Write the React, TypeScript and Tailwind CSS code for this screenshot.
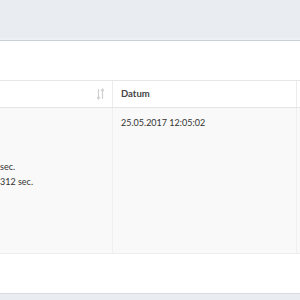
import React from 'react'

const SortIcon = () => (
  <svg width="7" height="12" viewBox="0 0 7 12" className="text-[#d0d0d0]">
    <path d="M1.5 1v10M0 9l1.5 2L3 9" stroke="currentColor" strokeWidth="1.2" fill="none" />
    <path d="M5.5 11V1M4 3l1.5-2L7 3" stroke="currentColor" strokeWidth="1.2" fill="none" />
  </svg>
)

export default function App() {
  return (
    <div className="w-[300px] h-[300px] overflow-hidden bg-white text-[#333] font-['Lato','Liberation_Sans',sans-serif] text-[9px]">
      {/* top bar */}
      <div className="h-[38px] bg-[#e9edf1]" />
      <div className="h-[2px] bg-[#edf1f4]" />
      <div className="h-px bg-[#c9d0d6]" />

      <div className="h-[39px]" />

      {/* table */}
      <div className="border-t border-[#e6e6e6]">
        <div className="flex h-[27px] border-b border-[#e4e4e4]">
          <div className="w-[113px] flex items-center justify-end pr-[8px] border-r border-[#ececec]">
            <SortIcon />
          </div>
          <div className="w-[183px] flex items-center pl-[8px] font-bold text-[9.5px] text-[#444]">Datum</div>
          <div className="flex-1 border-l border-[#ececec]" />
        </div>

        <div className="flex h-[146px] bg-[#f9f9f9] border-b border-[#ededed]">
          <div className="w-[113px] pt-[51px] leading-[15px] border-r border-[#efefef]">
            <div>sec.</div>
            <div>312 sec.</div>
          </div>
          <div className="w-[183px] pl-[8px] pt-[7px] leading-[15px]">25.05.2017 12:05:02</div>
          <div className="flex-1 border-l border-[#efefef]" />
        </div>
      </div>

      <div className="h-[39px]" />
      <div className="h-px bg-[#d5dbe1]" />
      <div className="h-[10px] bg-[#e9edf1]" />
    </div>
  )
}
